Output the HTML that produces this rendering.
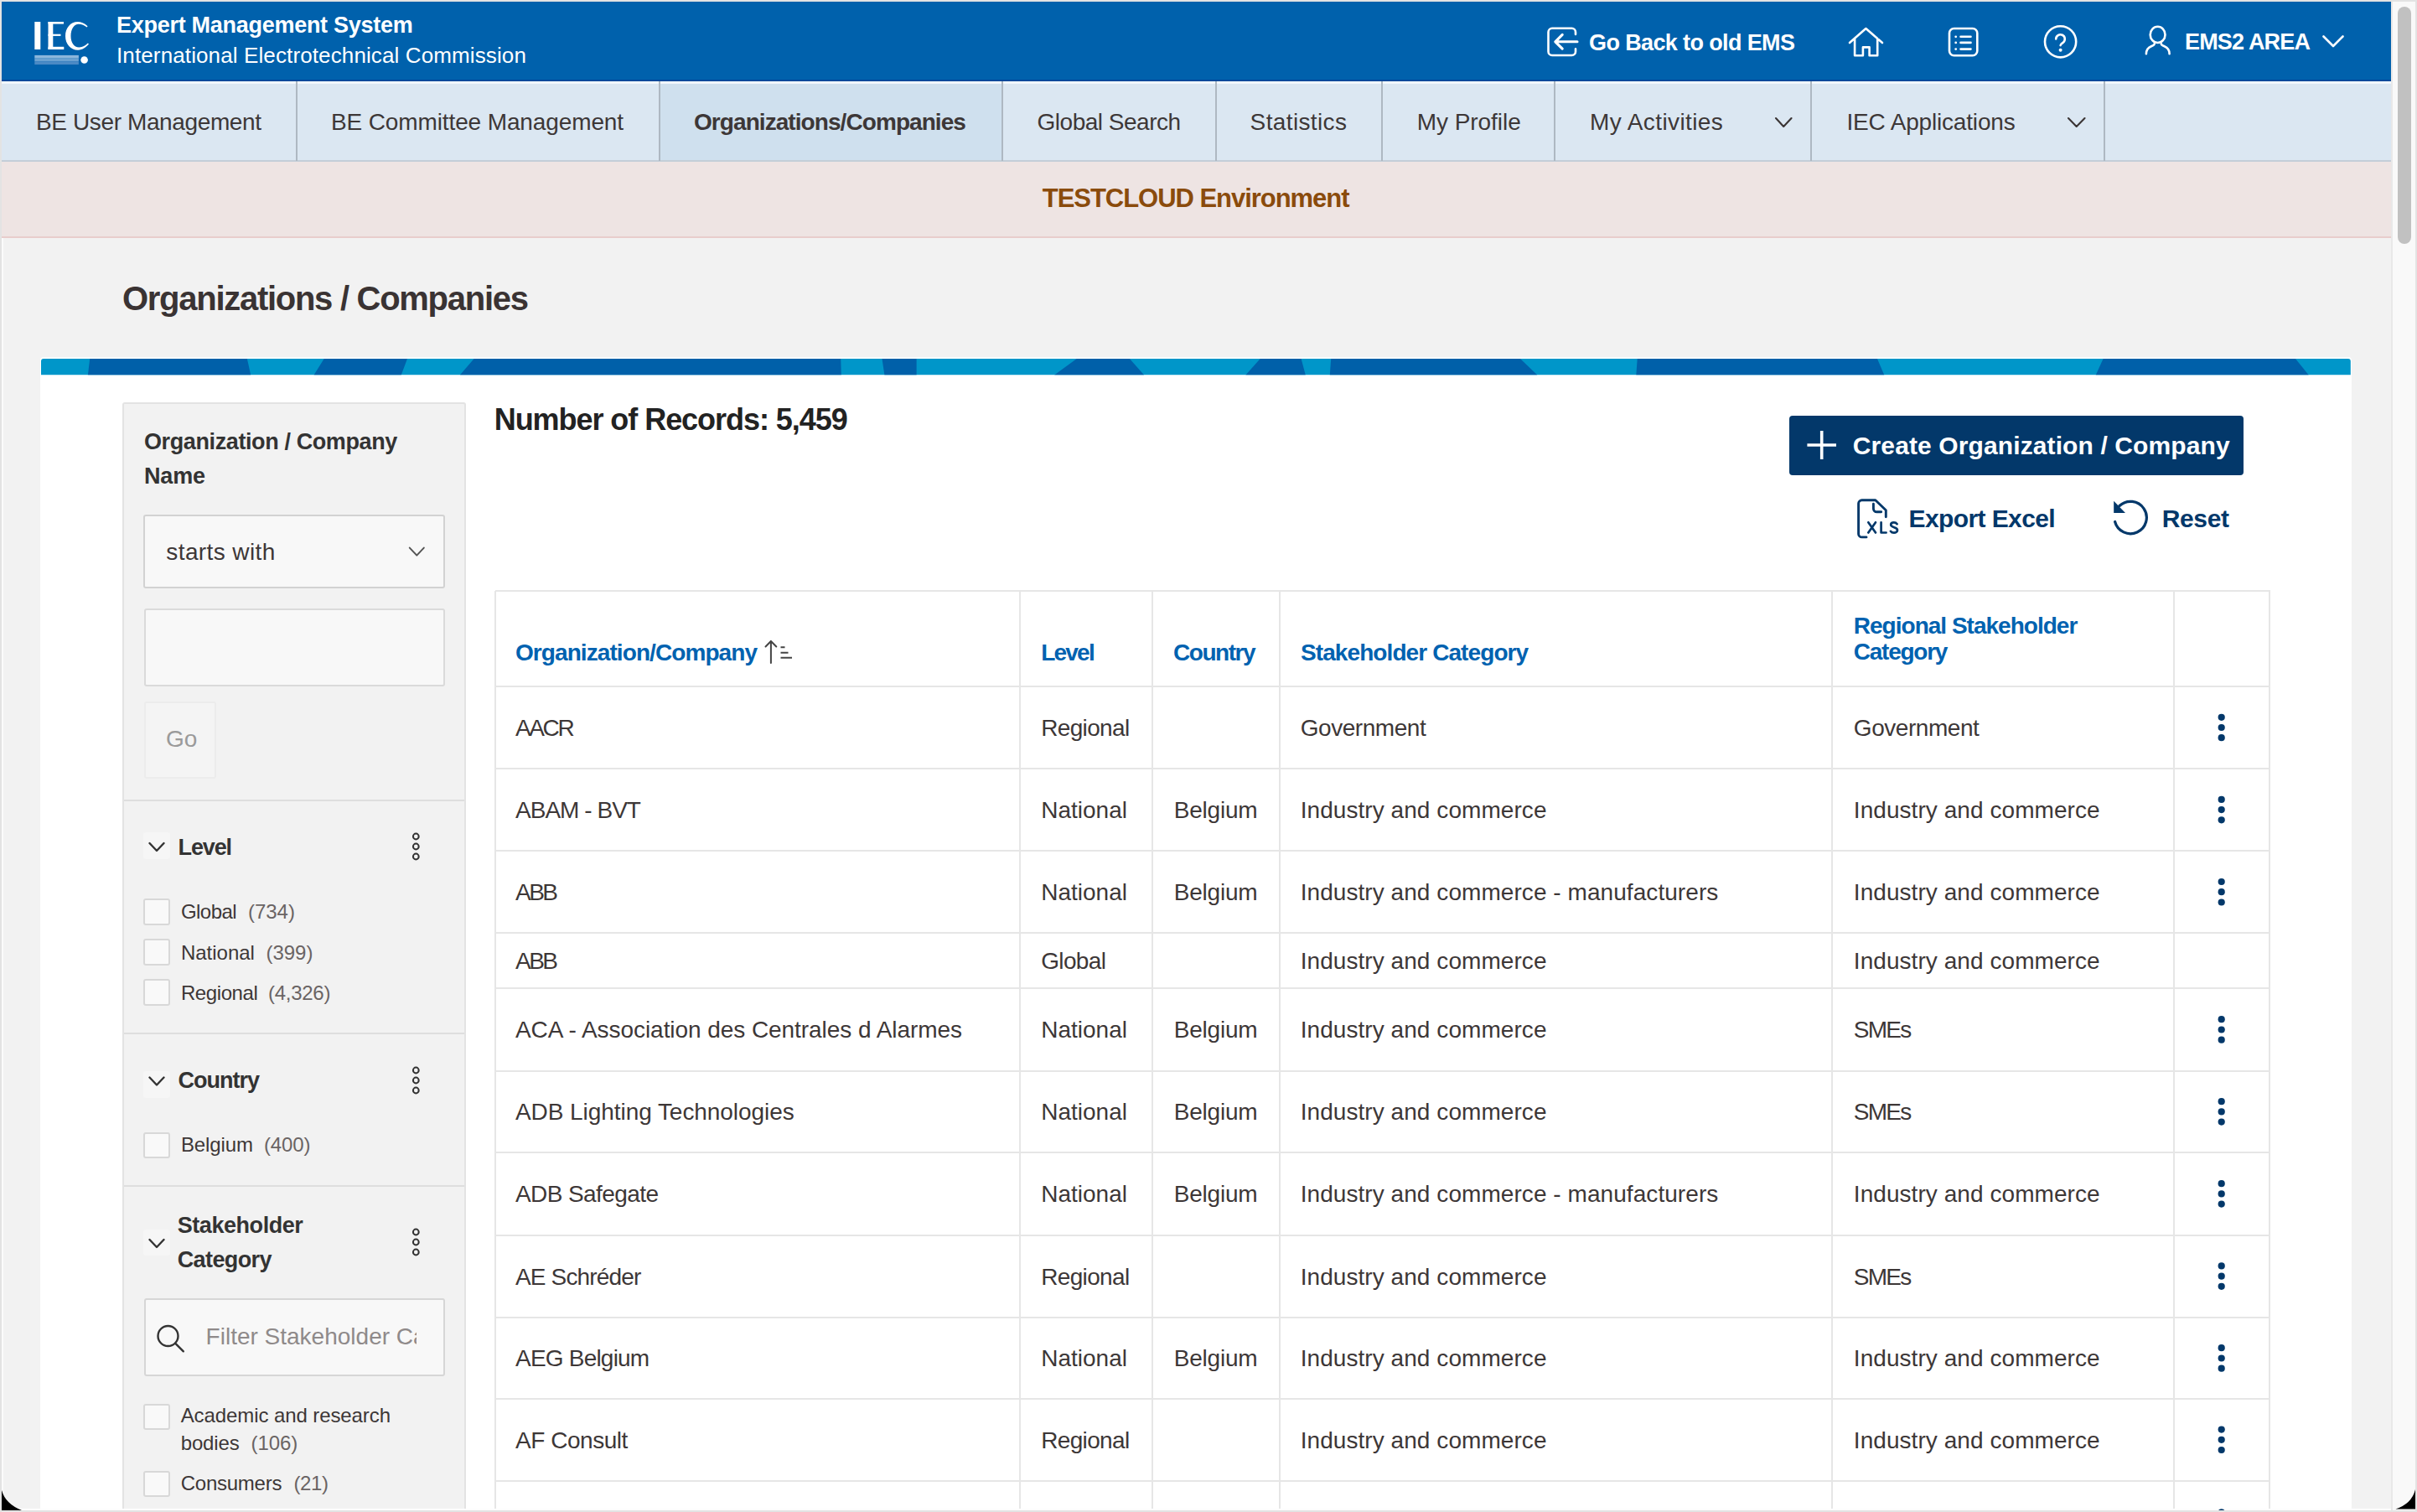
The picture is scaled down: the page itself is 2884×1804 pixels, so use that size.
<!DOCTYPE html>
<html><head><meta charset="utf-8"><title>Organizations / Companies</title>
<style>
html,body{margin:0;padding:0;width:2884px;height:1804px;overflow:hidden;background:#f2f2f2}
body{position:relative;font-family:"Liberation Sans",sans-serif}
.r{position:absolute}
.t{position:absolute;white-space:nowrap;line-height:1;font-family:"Liberation Sans",sans-serif}
.ov{position:absolute;left:0;top:0;pointer-events:none}
</style></head><body>
<div class="r" style="left:0.0px;top:0.0px;width:2884.0px;height:1804.0px;background:#e3e3e3;"></div>
<div class="r" style="left:2.0px;top:2.0px;width:2851.0px;height:1800.0px;background:#f2f2f2;"></div>
<div class="r" style="left:2.0px;top:2.0px;width:2851.0px;height:95.0px;background:#0061ac;"></div>
<div class="r" style="left:2.0px;top:94.8px;width:2851.0px;height:2.4px;background:#00489a;"></div>
<div class="r" style="left:2.0px;top:97.0px;width:2851.0px;height:96.0px;background:#dbe7f2;"></div>
<div class="r" style="left:787.0px;top:97.0px;width:409.0px;height:95.0px;background:#cfe0ee;"></div>
<div class="r" style="left:2.0px;top:97.2px;width:2851.0px;height:2.6px;background:#f1f6fb;"></div>
<div class="r" style="left:2.0px;top:191.2px;width:2851.0px;height:2.0px;background:#c3ced8;"></div>
<div class="r" style="left:353.0px;top:97.0px;width:2.0px;height:95.0px;background:#aeb8c2;"></div>
<div class="r" style="left:786.0px;top:97.0px;width:2.0px;height:95.0px;background:#aeb8c2;"></div>
<div class="r" style="left:1195.0px;top:97.0px;width:2.0px;height:95.0px;background:#aeb8c2;"></div>
<div class="r" style="left:1449.6px;top:97.0px;width:2.0px;height:95.0px;background:#aeb8c2;"></div>
<div class="r" style="left:1647.7px;top:97.0px;width:2.0px;height:95.0px;background:#aeb8c2;"></div>
<div class="r" style="left:1854.0px;top:97.0px;width:2.0px;height:95.0px;background:#aeb8c2;"></div>
<div class="r" style="left:2160.0px;top:97.0px;width:2.0px;height:95.0px;background:#aeb8c2;"></div>
<div class="r" style="left:2510.0px;top:97.0px;width:2.0px;height:95.0px;background:#aeb8c2;"></div>
<div class="r" style="left:2.0px;top:193.0px;width:2851.0px;height:90.0px;background:#eee4e3;"></div>
<div class="r" style="left:2.0px;top:281.5px;width:2851.0px;height:2.0px;background:#e8cdcc;"></div>
<div class="r" style="left:2853.0px;top:2.0px;width:2.0px;height:1800.0px;background:#e8e8e8;"></div>
<div class="r" style="left:2855.0px;top:2.0px;width:27.0px;height:1800.0px;background:#f9f9f9;"></div>
<div class="r" style="left:2861.0px;top:8.0px;width:15.5px;height:283.0px;background:#c1c1c1;border-radius:8px"></div>
<div class="r" style="left:47.5px;top:425.5px;width:2758.0px;height:1376.5px;background:#fff;border-radius:4px 4px 0 0"></div>
<div class="r" style="left:146.0px;top:479.5px;width:410.4px;height:1322.5px;background:#f2f2f2;box-sizing:border-box;border:2px solid #e3e3e3;border-bottom:none;border-radius:3px 3px 0 0"></div>
<div class="r" style="left:148.0px;top:953.9px;width:406.4px;height:2.0px;background:#dedede;"></div>
<div class="r" style="left:148.0px;top:1231.6px;width:406.4px;height:2.0px;background:#dedede;"></div>
<div class="r" style="left:148.0px;top:1413.7px;width:406.4px;height:2.0px;background:#dedede;"></div>
<div class="r" style="left:171.0px;top:614.0px;width:360.0px;height:87.5px;background:#f8f8f8;box-sizing:border-box;border:2px solid #d2d2d2;border-radius:3px"></div>
<div class="r" style="left:171.9px;top:726.0px;width:358.7px;height:92.7px;background:#f8f8f8;box-sizing:border-box;border:2px solid #dadada;border-radius:3px"></div>
<div class="r" style="left:172.0px;top:837.0px;width:86.0px;height:91.8px;background:#f4f4f4;box-sizing:border-box;border:2px solid #ececec;border-radius:3px"></div>
<div class="r" style="left:171.6px;top:1548.8px;width:359.4px;height:93.0px;background:#f8f8f8;box-sizing:border-box;border:2px solid #d6d6d6;border-radius:3px"></div>
<div class="r" style="left:171.0px;top:993.0px;width:31.6px;height:32.0px;background:#f6f6f6;border-radius:3px"></div>
<div class="r" style="left:171.0px;top:1278.0px;width:31.6px;height:32.0px;background:#f6f6f6;border-radius:3px"></div>
<div class="r" style="left:171.0px;top:1466.8px;width:31.6px;height:31.2px;background:#f6f6f6;border-radius:3px"></div>
<div class="r" style="left:171.2px;top:1072.0px;width:31.4px;height:31.6px;background:#f9f9f9;box-sizing:border-box;border:2px solid #d8d8d8;border-radius:3px"></div>
<div class="r" style="left:171.2px;top:1120.0px;width:31.4px;height:31.6px;background:#f9f9f9;box-sizing:border-box;border:2px solid #d8d8d8;border-radius:3px"></div>
<div class="r" style="left:171.2px;top:1168.0px;width:31.4px;height:31.6px;background:#f9f9f9;box-sizing:border-box;border:2px solid #d8d8d8;border-radius:3px"></div>
<div class="r" style="left:171.2px;top:1350.6px;width:31.4px;height:31.0px;background:#f9f9f9;box-sizing:border-box;border:2px solid #d8d8d8;border-radius:3px"></div>
<div class="r" style="left:171.2px;top:1675.3px;width:31.4px;height:30.6px;background:#f9f9f9;box-sizing:border-box;border:2px solid #d8d8d8;border-radius:3px"></div>
<div class="r" style="left:171.2px;top:1755.4px;width:31.4px;height:30.6px;background:#f9f9f9;box-sizing:border-box;border:2px solid #d8d8d8;border-radius:3px"></div>
<div class="r" style="left:2134.6px;top:495.9px;width:542.1px;height:71.3px;background:#03386a;border-radius:4px"></div>
<div class="r" style="left:590.5px;top:703.6px;width:2118.0px;height:2.0px;background:#e6e6e6;"></div>
<div class="r" style="left:590.5px;top:818.0px;width:2118.0px;height:2.0px;background:#e6e6e6;"></div>
<div class="r" style="left:590.5px;top:916.0px;width:2118.0px;height:2.0px;background:#e6e6e6;"></div>
<div class="r" style="left:590.5px;top:1014.2px;width:2118.0px;height:2.0px;background:#e6e6e6;"></div>
<div class="r" style="left:590.5px;top:1112.3px;width:2118.0px;height:2.0px;background:#e6e6e6;"></div>
<div class="r" style="left:590.5px;top:1178.4px;width:2118.0px;height:2.0px;background:#e6e6e6;"></div>
<div class="r" style="left:590.5px;top:1276.5px;width:2118.0px;height:2.0px;background:#e6e6e6;"></div>
<div class="r" style="left:590.5px;top:1374.3px;width:2118.0px;height:2.0px;background:#e6e6e6;"></div>
<div class="r" style="left:590.5px;top:1472.5px;width:2118.0px;height:2.0px;background:#e6e6e6;"></div>
<div class="r" style="left:590.5px;top:1570.7px;width:2118.0px;height:2.0px;background:#e6e6e6;"></div>
<div class="r" style="left:590.5px;top:1668.2px;width:2118.0px;height:2.0px;background:#e6e6e6;"></div>
<div class="r" style="left:590.5px;top:1765.5px;width:2118.0px;height:2.0px;background:#e6e6e6;"></div>
<div class="r" style="left:589.5px;top:704.6px;width:2.0px;height:1095.4px;background:#e6e6e6;"></div>
<div class="r" style="left:1215.7px;top:704.6px;width:2.0px;height:1095.4px;background:#e6e6e6;"></div>
<div class="r" style="left:1373.8px;top:704.6px;width:2.0px;height:1095.4px;background:#e6e6e6;"></div>
<div class="r" style="left:1525.9px;top:704.6px;width:2.0px;height:1095.4px;background:#e6e6e6;"></div>
<div class="r" style="left:2184.5px;top:704.6px;width:2.0px;height:1095.4px;background:#e6e6e6;"></div>
<div class="r" style="left:2592.9px;top:704.6px;width:2.0px;height:1095.4px;background:#e6e6e6;"></div>
<div class="r" style="left:2706.5px;top:704.6px;width:2.0px;height:1095.4px;background:#e6e6e6;"></div>
<div class="r" style="left:2.0px;top:1800.0px;width:2851.0px;height:2.0px;background:#fdfdfd;"></div>
<div class="r" style="left:2.0px;top:283.5px;width:2.0px;height:1518.5px;background:#fbfbfb;"></div>
<svg class="ov" width="2884" height="1804" viewBox="0 0 2884 1804">
<defs><clipPath id="bandclip"><path d="M49,447.5 V431 a3,3 0 0 1 3,-3 H2801.8 a3,3 0 0 1 3,3 V447.5 Z"/></clipPath></defs>
<g clip-path="url(#bandclip)"><rect x="49" y="428" width="2756" height="19.5" fill="#0096c9"/><polygon points="107.2,428.0 294.9,428.0 299.2,447.5 104.9,447.5" fill="#0060a9"/><polygon points="386.7,428.0 486.0,428.0 478.7,447.5 374.5,447.5" fill="#0060a9"/><polygon points="565.6,428.0 1003.2,428.0 1003.8,447.5 548.8,447.5" fill="#0060a9"/><polygon points="1052.5,428.0 1093.6,428.0 1093.6,447.5 1055.4,447.5" fill="#0060a9"/><polygon points="1284.7,428.0 1347.9,428.0 1365.2,447.5 1258.0,447.5" fill="#0060a9"/><polygon points="1503.7,428.0 1552.6,428.0 1557.8,447.5 1486.3,447.5" fill="#0060a9"/><polygon points="1588.2,428.0 1814.0,428.0 1834.4,447.5 1586.8,447.5" fill="#0060a9"/><polygon points="1953.7,428.0 2240.0,428.0 2248.3,447.5 1952.3,447.5" fill="#0060a9"/><polygon points="2509.6,428.0 2739.0,428.0 2754.8,447.5 2500.7,447.5" fill="#0060a9"/></g>
<!-- IEC logo -->
<g fill="#fff">
<rect x="41.3" y="26" width="7" height="33"/>
<rect x="57.5" y="26" width="5.8" height="33"/>
<rect x="57.5" y="26" width="18.5" height="2.6"/>
<rect x="57.5" y="40.7" width="15" height="2.2"/>
<rect x="57.5" y="55.8" width="18.8" height="3.2"/>
<path d="M104.6,31.2 C100.5,27.5 96.5,26 92.8,26 C84,26 78,33.5 78,43 C78,52.5 84.5,59.8 93,59.8 C98.5,59.8 102.5,56.5 106,52.6 L104.8,51.5 C101.8,54.2 98.8,56.5 94.5,56.5 C88,56.5 84.5,50.5 84.5,43 C84.5,34.5 88.5,28.8 93.8,28.8 C97.5,28.8 100.8,30.5 103.6,32.6 Z"/>
<circle cx="100.6" cy="71.5" r="4.3"/>
</g>
<rect x="41.3" y="65.9" width="52.6" height="3.7" fill="#8cb6dc"/>
<rect x="41.3" y="69.6" width="52.6" height="3.7" fill="#6ba2d1"/>
<rect x="41.3" y="73.3" width="52.6" height="3.7" fill="#4b8ac5"/>
<!-- exit icon -->
<path fill="none" stroke="#fff" stroke-width="2.6" stroke-linecap="round" stroke-linejoin="round" d="M1880,40.9 V38.3 a4.5,4.5 0 0 0 -4.5,-4.5 H1852 a4.5,4.5 0 0 0 -4.5,4.5 V61.5 a4.5,4.5 0 0 0 4.5,4.5 H1875.5 a4.5,4.5 0 0 0 4.5,-4.5 V58.4"/>
<path fill="none" stroke="#fff" stroke-width="3.1" stroke-linecap="round" stroke-linejoin="round" d="M1882,49.8 H1856 M1864.2,41.4 L1855.8,49.8 L1864.2,58.2"/>
<!-- home -->
<path fill="none" stroke="#fff" stroke-width="2.6" stroke-linecap="round" stroke-linejoin="round" d="M2207,51 L2226.4,34 L2246,51 M2213.1,46 V66.2 H2222.9 V56.4 H2230.6 V66.2 H2240.2 V46"/>
<!-- list -->
<rect x="2326" y="34" width="33.3" height="32.2" rx="5.5" fill="none" stroke="#fff" stroke-width="2.6" stroke-linecap="round" stroke-linejoin="round"/>
<path fill="none" stroke="#fff" stroke-width="2.6" stroke-linecap="round" stroke-linejoin="round" d="M2339.5,43.8 H2351.5 M2339.5,50.9 H2351.5 M2339.5,58.6 H2351.5"/>
<g fill="#fff"><circle cx="2333.7" cy="43.8" r="1.4"/><circle cx="2333.7" cy="50.9" r="1.4"/><circle cx="2333.7" cy="58.6" r="1.4"/></g>
<!-- help -->
<circle cx="2458.6" cy="49.8" r="18.6" fill="none" stroke="#fff" stroke-width="2.6" stroke-linecap="round" stroke-linejoin="round"/>
<path fill="none" stroke="#fff" stroke-width="2.6" stroke-linecap="round" stroke-linejoin="round" d="M2453.2,46.5 a5.3,5.3 0 1 1 8.6,4.2 c-1.8,1.4 -3.2,2.2 -3.2,3.4"/>
<circle cx="2458.6" cy="59.8" r="2" fill="#fff"/>
<!-- user -->
<ellipse cx="2574.6" cy="41.4" rx="8.9" ry="9.6" fill="none" stroke="#fff" stroke-width="2.6" stroke-linecap="round" stroke-linejoin="round"/>
<path fill="none" stroke="#fff" stroke-width="2.6" stroke-linecap="round" stroke-linejoin="round" d="M2560.9,64.2 c0,-5 2.5,-7.5 6,-9 c2.5,-1 3.8,-2 3.8,-3 M2588.6,64.2 c0,-5 -2.5,-7.5 -6,-9 c-2.5,-1 -3.8,-2 -3.8,-3"/>
<path fill="none" stroke="#fff" stroke-width="2.6" stroke-linecap="round" stroke-linejoin="round" d="M2772.5,43.5 L2784,55 L2795.5,43.5"/>
<!-- nav chevrons -->
<path fill="none" stroke="#3b3535" stroke-width="2.1" stroke-linecap="round" stroke-linejoin="round" d="M2119,141 L2128.2,151 L2137.5,141 M2468,141 L2477.7,151 L2487.5,141"/>
<!-- select chevron -->
<path fill="none" stroke="#555" stroke-width="2" stroke-linecap="round" stroke-linejoin="round" d="M488.8,653.6 L497.3,662.6 L505.8,653.6"/>
<!-- filter chevrons -->
<path fill="none" stroke="#333" stroke-width="2.4" stroke-linecap="round" stroke-linejoin="round" d="M178.5,1006 L187,1015 L195.5,1006 M178.5,1285.5 L187,1294.5 L195.5,1285.5 M178.5,1479 L187,1488 L195.5,1479"/>
<!-- filter kebabs -->
<g fill="none" stroke="#333" stroke-width="2">
<circle cx="496.3" cy="998" r="3.4"/><circle cx="496.3" cy="1010" r="3.4"/><circle cx="496.3" cy="1022" r="3.4"/>
<circle cx="496.3" cy="1277" r="3.4"/><circle cx="496.3" cy="1289" r="3.4"/><circle cx="496.3" cy="1301" r="3.4"/>
<circle cx="496.3" cy="1470" r="3.4"/><circle cx="496.3" cy="1482" r="3.4"/><circle cx="496.3" cy="1494" r="3.4"/>
</g>
<!-- search icon -->
<g fill="none" stroke="#333" stroke-width="2.4" stroke-linecap="round"><circle cx="200.5" cy="1594" r="12"/><path d="M209.3,1602.8 L218.8,1612.3"/></g>
<!-- plus -->
<path fill="none" stroke="#fff" stroke-width="3.6" d="M2173.7,514 V548 M2156.4,531 H2191"/>
<!-- xls icon -->
<path fill="none" stroke="#03386a" stroke-width="2.9" stroke-linecap="round" stroke-linejoin="round" d="M2227,640.9 H2221.6 a4,4 0 0 1 -4,-4 V600.8 a4,4 0 0 1 4,-4 H2237.8 L2250.3,608.8 V616.8 M2235.4,601.3 V606.8 a4,4 0 0 0 4,4 H2244.7"/>
<path fill="none" stroke="#03386a" stroke-width="2.7" stroke-linecap="round" stroke-linejoin="round" d="M2229.3,623.3 L2238,635.5 M2238,623.3 L2229.3,635.5 M2244.6,623.3 V635.5 H2250.6 M2263.6,625.2 c-0.9,-1.3 -2.3,-1.9 -3.8,-1.9 c-2.1,0 -3.6,1.2 -3.6,2.8 c0,3.9 7.8,2.4 7.8,6.3 c0,1.9 -1.7,3.3 -4.1,3.3 c-1.8,0 -3.2,-0.7 -4,-1.9"/>
<!-- reset icon -->
<path fill="none" stroke="#03386a" stroke-width="3.2" stroke-linecap="round" d="M2523.6,622.5 A19.2,19.2 0 1 0 2529,603.5"/>
<path fill="#03386a" d="M2522.2,597.8 L2522.2,612 L2536,612 Z"/>
<!-- sort icon -->
<path fill="none" stroke="#444" stroke-width="2" stroke-linecap="round" stroke-linejoin="round" d="M919.9,791 V765 M913.5,771.5 L919.9,765 L926.3,771.5"/>
<path fill="none" stroke="#444" stroke-width="2" d="M931.5,772.2 H936.5 M931.5,778.8 H940.5 M931.5,784.8 H945"/>
<!-- table kebabs -->
<clipPath id="botclip"><rect x="0" y="0" width="2884" height="1802"/></clipPath><circle cx="2650.7" cy="1804.3" r="4.1" fill="#03386a" clip-path="url(#botclip)"/>
<g fill="#03386a"><circle cx="2650.7" cy="855.8" r="4.1"/><circle cx="2650.7" cy="868.0" r="4.1"/><circle cx="2650.7" cy="880.2" r="4.1"/><circle cx="2650.7" cy="953.9" r="4.1"/><circle cx="2650.7" cy="966.1" r="4.1"/><circle cx="2650.7" cy="978.3" r="4.1"/><circle cx="2650.7" cy="1052.0" r="4.1"/><circle cx="2650.7" cy="1064.2" r="4.1"/><circle cx="2650.7" cy="1076.5" r="4.1"/><circle cx="2650.7" cy="1216.2" r="4.1"/><circle cx="2650.7" cy="1228.5" r="4.1"/><circle cx="2650.7" cy="1240.7" r="4.1"/><circle cx="2650.7" cy="1314.2" r="4.1"/><circle cx="2650.7" cy="1326.4" r="4.1"/><circle cx="2650.7" cy="1338.6" r="4.1"/><circle cx="2650.7" cy="1412.2" r="4.1"/><circle cx="2650.7" cy="1424.4" r="4.1"/><circle cx="2650.7" cy="1436.6" r="4.1"/><circle cx="2650.7" cy="1510.4" r="4.1"/><circle cx="2650.7" cy="1522.6" r="4.1"/><circle cx="2650.7" cy="1534.8" r="4.1"/><circle cx="2650.7" cy="1608.2" r="4.1"/><circle cx="2650.7" cy="1620.5" r="4.1"/><circle cx="2650.7" cy="1632.7" r="4.1"/><circle cx="2650.7" cy="1705.6" r="4.1"/><circle cx="2650.7" cy="1717.8" r="4.1"/><circle cx="2650.7" cy="1730.0" r="4.1"/></g>
<!-- bottom corners -->
<path fill="#000" d="M2,1777.7 Q6,1794 26,1802 L2,1802 Z"/>
<path fill="#000" d="M2882,1777 Q2878,1794 2858.5,1800.5 L2882,1800.5 Z"/>
</svg>
<div class="t" id="t0" style="left:139.0px;top:17.4px;font-size:27px;font-weight:700;color:#fff;letter-spacing:-0.28px">Expert Management System</div>
<div class="t" id="t1" style="left:139.0px;top:53.4px;font-size:26px;font-weight:400;color:#fff;letter-spacing:0.12px">International Electrotechnical Commission</div>
<div class="t" id="t2" style="left:1896.0px;top:38.0px;font-size:27px;font-weight:700;color:#fff;letter-spacing:-0.62px">Go Back to old EMS</div>
<div class="t" id="t3" style="left:2607.0px;top:37.0px;font-size:27px;font-weight:700;color:#fff;letter-spacing:-0.82px">EMS2 AREA</div>
<div class="t" id="t4" style="left:43.0px;top:132.0px;font-size:28px;font-weight:400;color:#3d3737;letter-spacing:-0.38px">BE User Management</div>
<div class="t" id="t5" style="left:395.0px;top:132.0px;font-size:28px;font-weight:400;color:#3d3737;letter-spacing:-0.12px">BE Committee Management</div>
<div class="t" id="t6" style="left:828.0px;top:132.0px;font-size:28px;font-weight:700;color:#3d3737;letter-spacing:-0.93px">Organizations/Companies</div>
<div class="t" id="t7" style="left:1237.6px;top:132.0px;font-size:28px;font-weight:400;color:#3d3737;letter-spacing:-0.50px">Global Search</div>
<div class="t" id="t8" style="left:1491.6px;top:132.0px;font-size:28px;font-weight:400;color:#3d3737;letter-spacing:0.37px">Statistics</div>
<div class="t" id="t9" style="left:1690.7px;top:132.0px;font-size:28px;font-weight:400;color:#3d3737;letter-spacing:-0.05px">My Profile</div>
<div class="t" id="t10" style="left:1897.0px;top:132.0px;font-size:28px;font-weight:400;color:#3d3737;letter-spacing:0.40px">My Activities</div>
<div class="t" id="t11" style="left:2203.5px;top:132.0px;font-size:28px;font-weight:400;color:#3d3737;letter-spacing:-0.18px">IEC Applications</div>
<div class="t" id="t12" style="left:1243.8px;top:221.4px;font-size:31px;font-weight:700;color:#8a4b0c;letter-spacing:-1.04px">TESTCLOUD Environment</div>
<div class="t" id="t13" style="left:146.0px;top:335.8px;font-size:40px;font-weight:700;color:#3a3333;letter-spacing:-1.28px">Organizations / Companies</div>
<div class="t" id="t14" style="left:172.0px;top:514.0px;font-size:27px;font-weight:700;color:#333;letter-spacing:-0.39px">Organization / Company</div>
<div class="t" id="t15" style="left:172.0px;top:555.4px;font-size:27px;font-weight:700;color:#333;letter-spacing:-0.18px">Name</div>
<div class="t" id="t16" style="left:198.3px;top:644.7px;font-size:28px;font-weight:400;color:#3d3737;letter-spacing:0.40px">starts with</div>
<div class="t" id="t17" style="left:198.0px;top:868.4px;font-size:28px;font-weight:400;color:#9a9a9a">Go</div>
<div class="t" id="t18" style="left:212.6px;top:998.0px;font-size:27px;font-weight:700;color:#333;letter-spacing:-1.14px">Level</div>
<div class="t" id="t19" style="left:215.9px;top:1076.0px;font-size:24px;font-weight:400;color:#3d3737;letter-spacing:-0.52px">Global</div>
<div class="t" id="t20" style="left:295.9px;top:1076.0px;font-size:24px;font-weight:400;color:#6a6464">(734)</div>
<div class="t" id="t21" style="left:215.9px;top:1125.0px;font-size:24px;font-weight:400;color:#3d3737">National</div>
<div class="t" id="t22" style="left:317.4px;top:1125.0px;font-size:24px;font-weight:400;color:#6a6464">(399)</div>
<div class="t" id="t23" style="left:215.9px;top:1172.9px;font-size:24px;font-weight:400;color:#3d3737;letter-spacing:-0.40px">Regional</div>
<div class="t" id="t24" style="left:320.0px;top:1172.9px;font-size:24px;font-weight:400;color:#6a6464;letter-spacing:-0.27px">(4,326)</div>
<div class="t" id="t25" style="left:212.6px;top:1276.0px;font-size:27px;font-weight:700;color:#333;letter-spacing:-1.00px">Country</div>
<div class="t" id="t26" style="left:215.9px;top:1354.0px;font-size:24px;font-weight:400;color:#3d3737;letter-spacing:-0.12px">Belgium</div>
<div class="t" id="t27" style="left:315.0px;top:1354.0px;font-size:24px;font-weight:400;color:#6a6464;letter-spacing:-0.13px">(400)</div>
<div class="t" id="t28" style="left:211.7px;top:1448.8px;font-size:27px;font-weight:700;color:#333;letter-spacing:-0.44px">Stakeholder</div>
<div class="t" id="t29" style="left:211.7px;top:1490.2px;font-size:27px;font-weight:700;color:#333;letter-spacing:-0.60px">Category</div>
<div class="t" id="t30" style="left:245.6px;top:1581.4px;font-size:28px;font-weight:400;color:#8f8a8a;width:251.2px;overflow:hidden">Filter Stakeholder Category</div>
<div class="t" id="t31" style="left:215.7px;top:1677.4px;font-size:24px;font-weight:400;color:#3d3737;letter-spacing:-0.09px">Academic and research</div>
<div class="t" id="t32" style="left:215.7px;top:1709.5px;font-size:24px;font-weight:400;color:#3d3737;letter-spacing:-0.15px">bodies</div>
<div class="t" id="t33" style="left:299.6px;top:1709.5px;font-size:24px;font-weight:400;color:#6a6464;letter-spacing:-0.11px">(106)</div>
<div class="t" id="t34" style="left:215.7px;top:1758.0px;font-size:24px;font-weight:400;color:#3d3737;letter-spacing:-0.24px">Consumers</div>
<div class="t" id="t35" style="left:350.4px;top:1758.0px;font-size:24px;font-weight:400;color:#6a6464;letter-spacing:-0.33px">(21)</div>
<div class="t" id="t36" style="left:589.7px;top:482.5px;font-size:36px;font-weight:700;color:#222;letter-spacing:-1.05px">Number of Records: 5,459</div>
<div class="t" id="t37" style="left:2210.8px;top:516.6px;font-size:30px;font-weight:700;color:#fff;letter-spacing:0.11px">Create Organization / Company</div>
<div class="t" id="t38" style="left:2277.5px;top:604.3px;font-size:30px;font-weight:700;color:#03386a;letter-spacing:-0.60px">Export Excel</div>
<div class="t" id="t39" style="left:2579.7px;top:604.3px;font-size:30px;font-weight:700;color:#03386a;letter-spacing:-0.35px">Reset</div>
<div class="t" id="t40" style="left:615.0px;top:765.0px;font-size:28px;font-weight:700;color:#0062b0;letter-spacing:-0.92px">Organization/Company</div>
<div class="t" id="t41" style="left:1242.2px;top:765.0px;font-size:28px;font-weight:700;color:#0062b0;letter-spacing:-1.78px">Level</div>
<div class="t" id="t42" style="left:1400.0px;top:765.0px;font-size:28px;font-weight:700;color:#0062b0;letter-spacing:-1.47px">Country</div>
<div class="t" id="t43" style="left:1552.0px;top:765.0px;font-size:28px;font-weight:700;color:#0062b0;letter-spacing:-0.91px">Stakeholder Category</div>
<div class="t" id="t44" style="left:2211.8px;top:732.7px;font-size:28px;font-weight:700;color:#0062b0;letter-spacing:-0.99px">Regional Stakeholder</div>
<div class="t" id="t45" style="left:2211.8px;top:764.4px;font-size:28px;font-weight:700;color:#0062b0;letter-spacing:-1.25px">Category</div>
<div class="t" id="t46" style="left:615.0px;top:855.0px;font-size:28px;font-weight:400;color:#3d3737;letter-spacing:-2.37px">AACR</div>
<div class="t" id="t47" style="left:1242.2px;top:855.0px;font-size:28px;font-weight:400;color:#3d3737;letter-spacing:-0.65px">Regional</div>
<div class="t" id="t48" style="left:1551.7px;top:855.0px;font-size:28px;font-weight:400;color:#3d3737;letter-spacing:-0.45px">Government</div>
<div class="t" id="t49" style="left:2211.8px;top:855.0px;font-size:28px;font-weight:400;color:#3d3737;letter-spacing:-0.45px">Government</div>
<div class="t" id="t50" style="left:615.0px;top:953.2px;font-size:28px;font-weight:400;color:#3d3737;letter-spacing:-0.97px">ABAM - BVT</div>
<div class="t" id="t51" style="left:1242.2px;top:953.2px;font-size:28px;font-weight:400;color:#3d3737">National</div>
<div class="t" id="t52" style="left:1400.7px;top:953.2px;font-size:28px;font-weight:400;color:#3d3737;letter-spacing:-0.20px">Belgium</div>
<div class="t" id="t53" style="left:1551.7px;top:953.2px;font-size:28px;font-weight:400;color:#3d3737;letter-spacing:0.06px">Industry and commerce</div>
<div class="t" id="t54" style="left:2211.8px;top:953.2px;font-size:28px;font-weight:400;color:#3d3737;letter-spacing:0.06px">Industry and commerce</div>
<div class="t" id="t55" style="left:615.0px;top:1051.2px;font-size:28px;font-weight:400;color:#3d3737;letter-spacing:-2.52px">ABB</div>
<div class="t" id="t56" style="left:1242.2px;top:1051.2px;font-size:28px;font-weight:400;color:#3d3737">National</div>
<div class="t" id="t57" style="left:1400.7px;top:1051.2px;font-size:28px;font-weight:400;color:#3d3737;letter-spacing:-0.20px">Belgium</div>
<div class="t" id="t58" style="left:1551.7px;top:1051.2px;font-size:28px;font-weight:400;color:#3d3737;letter-spacing:0.06px">Industry and commerce - manufacturers</div>
<div class="t" id="t59" style="left:2211.8px;top:1051.2px;font-size:28px;font-weight:400;color:#3d3737;letter-spacing:0.06px">Industry and commerce</div>
<div class="t" id="t60" style="left:615.0px;top:1133.4px;font-size:28px;font-weight:400;color:#3d3737;letter-spacing:-2.52px">ABB</div>
<div class="t" id="t61" style="left:1242.2px;top:1133.4px;font-size:28px;font-weight:400;color:#3d3737;letter-spacing:-0.63px">Global</div>
<div class="t" id="t62" style="left:1551.7px;top:1133.4px;font-size:28px;font-weight:400;color:#3d3737;letter-spacing:0.06px">Industry and commerce</div>
<div class="t" id="t63" style="left:2211.8px;top:1133.4px;font-size:28px;font-weight:400;color:#3d3737;letter-spacing:0.06px">Industry and commerce</div>
<div class="t" id="t64" style="left:615.0px;top:1215.4px;font-size:28px;font-weight:400;color:#3d3737;letter-spacing:-0.06px">ACA - Association des Centrales d Alarmes</div>
<div class="t" id="t65" style="left:1242.2px;top:1215.4px;font-size:28px;font-weight:400;color:#3d3737">National</div>
<div class="t" id="t66" style="left:1400.7px;top:1215.4px;font-size:28px;font-weight:400;color:#3d3737;letter-spacing:-0.20px">Belgium</div>
<div class="t" id="t67" style="left:1551.7px;top:1215.4px;font-size:28px;font-weight:400;color:#3d3737;letter-spacing:0.06px">Industry and commerce</div>
<div class="t" id="t68" style="left:2211.8px;top:1215.4px;font-size:28px;font-weight:400;color:#3d3737;letter-spacing:-1.73px">SMEs</div>
<div class="t" id="t69" style="left:615.0px;top:1313.4px;font-size:28px;font-weight:400;color:#3d3737;letter-spacing:-0.06px">ADB Lighting Technologies</div>
<div class="t" id="t70" style="left:1242.2px;top:1313.4px;font-size:28px;font-weight:400;color:#3d3737">National</div>
<div class="t" id="t71" style="left:1400.7px;top:1313.4px;font-size:28px;font-weight:400;color:#3d3737;letter-spacing:-0.20px">Belgium</div>
<div class="t" id="t72" style="left:1551.7px;top:1313.4px;font-size:28px;font-weight:400;color:#3d3737;letter-spacing:0.06px">Industry and commerce</div>
<div class="t" id="t73" style="left:2211.8px;top:1313.4px;font-size:28px;font-weight:400;color:#3d3737;letter-spacing:-1.73px">SMEs</div>
<div class="t" id="t74" style="left:615.0px;top:1411.4px;font-size:28px;font-weight:400;color:#3d3737;letter-spacing:-0.59px">ADB Safegate</div>
<div class="t" id="t75" style="left:1242.2px;top:1411.4px;font-size:28px;font-weight:400;color:#3d3737">National</div>
<div class="t" id="t76" style="left:1400.7px;top:1411.4px;font-size:28px;font-weight:400;color:#3d3737;letter-spacing:-0.20px">Belgium</div>
<div class="t" id="t77" style="left:1551.7px;top:1411.4px;font-size:28px;font-weight:400;color:#3d3737;letter-spacing:0.06px">Industry and commerce - manufacturers</div>
<div class="t" id="t78" style="left:2211.8px;top:1411.4px;font-size:28px;font-weight:400;color:#3d3737;letter-spacing:0.06px">Industry and commerce</div>
<div class="t" id="t79" style="left:615.0px;top:1509.7px;font-size:28px;font-weight:400;color:#3d3737;letter-spacing:-0.84px">AE Schréder</div>
<div class="t" id="t80" style="left:1242.2px;top:1509.7px;font-size:28px;font-weight:400;color:#3d3737;letter-spacing:-0.65px">Regional</div>
<div class="t" id="t81" style="left:1551.7px;top:1509.7px;font-size:28px;font-weight:400;color:#3d3737;letter-spacing:0.06px">Industry and commerce</div>
<div class="t" id="t82" style="left:2211.8px;top:1509.7px;font-size:28px;font-weight:400;color:#3d3737;letter-spacing:-1.73px">SMEs</div>
<div class="t" id="t83" style="left:615.0px;top:1607.4px;font-size:28px;font-weight:400;color:#3d3737;letter-spacing:-0.79px">AEG Belgium</div>
<div class="t" id="t84" style="left:1242.2px;top:1607.4px;font-size:28px;font-weight:400;color:#3d3737">National</div>
<div class="t" id="t85" style="left:1400.7px;top:1607.4px;font-size:28px;font-weight:400;color:#3d3737;letter-spacing:-0.20px">Belgium</div>
<div class="t" id="t86" style="left:1551.7px;top:1607.4px;font-size:28px;font-weight:400;color:#3d3737;letter-spacing:0.06px">Industry and commerce</div>
<div class="t" id="t87" style="left:2211.8px;top:1607.4px;font-size:28px;font-weight:400;color:#3d3737;letter-spacing:0.06px">Industry and commerce</div>
<div class="t" id="t88" style="left:615.0px;top:1704.9px;font-size:28px;font-weight:400;color:#3d3737;letter-spacing:-0.46px">AF Consult</div>
<div class="t" id="t89" style="left:1242.2px;top:1704.9px;font-size:28px;font-weight:400;color:#3d3737;letter-spacing:-0.65px">Regional</div>
<div class="t" id="t90" style="left:1551.7px;top:1704.9px;font-size:28px;font-weight:400;color:#3d3737;letter-spacing:0.06px">Industry and commerce</div>
<div class="t" id="t91" style="left:2211.8px;top:1704.9px;font-size:28px;font-weight:400;color:#3d3737;letter-spacing:0.06px">Industry and commerce</div>
</body></html>
